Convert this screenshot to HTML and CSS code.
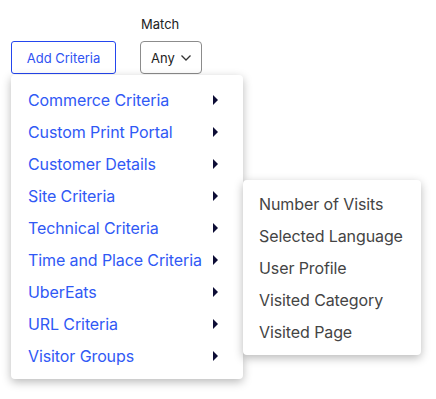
FILE: index.html
```html
<!DOCTYPE html>
<html lang="en">
<head>
  <meta charset="UTF-8"/>
  <title>Criteria</title>
  <link rel="stylesheet" href="styles.css">
</head>
<body>
  <div class="toolbar">
    <div class="field">
      <div class="add-wrap">
        <button class="add-btn">Add Criteria</button>
        <ul class="menu">
          <li class="item">Commerce Criteria<span class="caret"></span></li>
          <li class="item">Custom Print Portal<span class="caret"></span></li>
          <li class="item">Customer Details<span class="caret"></span></li>
          <li class="item open">Site Criteria<span class="caret"></span>
            <ul class="submenu">
              <li>Number of Visits</li>
              <li>Selected Language</li>
              <li>User Profile</li>
              <li>Visited Category</li>
              <li>Visited Page</li>
            </ul>
          </li>
          <li class="item">Technical Criteria<span class="caret"></span></li>
          <li class="item">Time and Place Criteria<span class="caret"></span></li>
          <li class="item">UberEats<span class="caret"></span></li>
          <li class="item">URL Criteria<span class="caret"></span></li>
          <li class="item">Visitor Groups<span class="caret"></span></li>
        </ul>
      </div>
    </div>
    <div class="field">
      <label class="label">Match</label>
      <button class="match-btn">Any
        <svg width="12" height="8" viewBox="0 0 12 8"><path d="M1.5 1.5 L6 6 L10.5 1.5" fill="none" stroke="#333" stroke-width="1.3"/></svg>
      </button>
    </div>
  </div>
</body>
</html>
```

FILE: styles.css
```css
html, body { height:100%; }
body { margin:0; min-height:399px; font-family: Inter, "Noto Sans", sans-serif; background:#fff; }
.toolbar { display:flex; align-items:flex-end; gap:24px; padding:15px 11px; }
.field { display:flex; flex-direction:column; }
.label { font-size:13px; line-height:18px; color:#222; margin-bottom:8px; padding-left:1px; }
.add-wrap { position:relative; }
.add-btn { height:33px; width:105px; font-family:inherit; font-size:13px; color:#2f52f2; background:#fff;
  border:1px solid #2446ee; border-radius:3px; cursor:pointer; }
.match-btn { height:33px; width:62px; font-family:inherit; font-size:13px; color:#222; background:#fff;
  border:1px solid #8c8c8c; border-radius:4px; display:flex; align-items:center; justify-content:center; gap:5px; padding:0 0 0 1px; }
.menu { position:absolute; top:34px; left:0; width:232px; margin:0; padding:9px 0 7px; list-style:none; background:#fff;
  border-radius:4px; box-shadow:0 3px 10px rgba(0,0,0,0.28); }
.item { position:relative; height:32px; display:flex; align-items:center; justify-content:space-between;
  padding:0 25px 0 17px; font-size:16px; letter-spacing:-0.1px; color:#3059f5; cursor:pointer; }
.caret { flex:none; width:0; height:0; border-top:5px solid transparent; border-bottom:5px solid transparent; border-left:5px solid #0d0d35; }
.submenu { position:absolute; top:0; left:232px; width:178px; margin:0; padding:8px 0 7px; list-style:none; background:#fff;
  border-radius:4px; box-shadow:0 3px 10px rgba(0,0,0,0.28); }
.submenu li { height:32px; display:flex; align-items:center; padding-left:16px; font-size:16px; letter-spacing:-0.1px; color:#444; }
```
